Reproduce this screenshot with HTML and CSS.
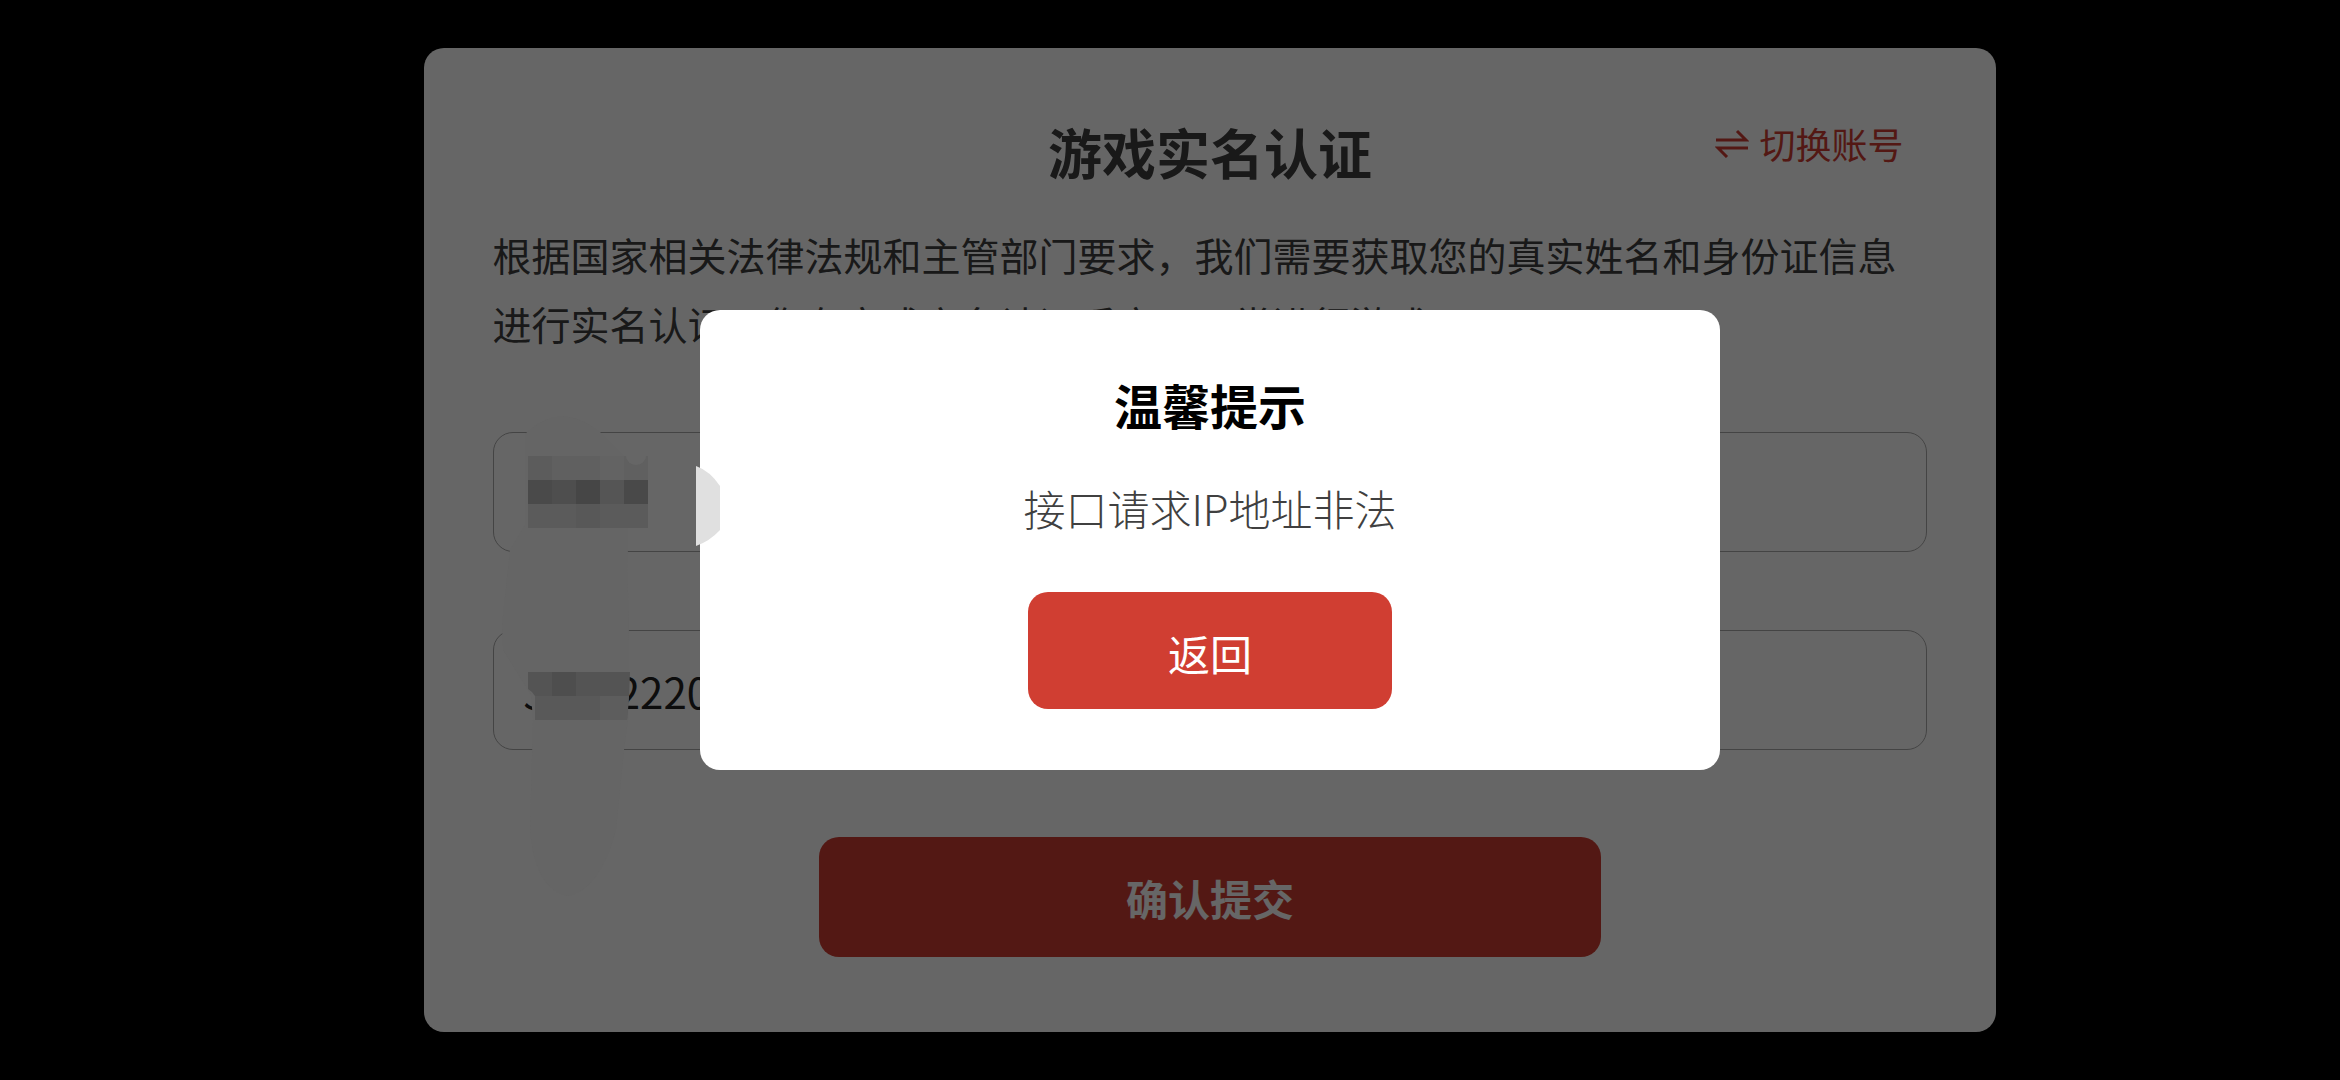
FILE: index.html
```
<!DOCTYPE html>
<html lang="zh">
<head>
    <meta charset="UTF-8">
    <meta name="viewport" content="width=device-width, initial-scale=1.0">
    <title>游戏实名认证</title>
    <link rel="stylesheet" href="styles.css">
</head>
<body>
<main class="page">
    <form class="auth-card">
        <div class="auth-header">
            <h1>游戏实名认证</h1>
            <button type="button" class="switch-btn">
                <svg class="switch-icon" viewBox="0 0 34 30" aria-hidden="true">
                    <path d="M1 12H31L22 3M33 20H3L12 29"/>
                </svg>
                切换账号
            </button>
        </div>

        <p class="auth-desc">根据国家相关法律法规和主管部门要求，我们需要获取您的真实姓名和身份证信息进行实名认证，您在完成实名认证后方可正常进行游戏。</p>

        <div class="form-group">
            <input type="text" class="realname" aria-label="真实姓名">
            <input type="text" class="idcard" aria-label="身份证号" value="3&#8199;&#8199;&#8199;2220">
        </div>

        <button type="submit" class="submit-btn">确认提交</button>
    </form>
</main>

<div class="overlay">
    <div class="modal" role="dialog" aria-labelledby="modalTitle">
        <h2 id="modalTitle">温馨提示</h2>
        <p class="modal-text">接口请求IP地址非法</p>
        <button type="button" class="back-btn">返回</button>
    </div>
</div>

<!-- 隐私遮挡 -->
<svg class="privacy-mask" viewBox="0 0 230 500" aria-hidden="true">
    <path fill="#656565" d="M25 34Q60 0 100 32L128 60V150L127 165L129 220L128 320L124 350L116 430Q100 490 68 496Q35 490 30 430L33 320L31 295L3 250L2 225L10 150L25 125Z"/>
    <g shape-rendering="crispEdges">
        <path fill="#5c5c5c" d="M28 56h24v24H28z"/>
        <path fill="#606060" d="M52 56h48v24H52z"/>
        <path fill="#636363" d="M100 56h24v24h-24z"/>
        <path fill="#606060" d="M124 56h24v24h-24z"/>
        <path fill="#4a4a4a" d="M28 80h24v24H28z"/>
        <path fill="#4e4e4e" d="M52 80h24v24H52z"/>
        <path fill="#464646" d="M76 80h24v24H76z"/>
        <path fill="#555" d="M100 80h24v24h-24z"/>
        <path fill="#494949" d="M124 80h24v24h-24z"/>
        <path fill="#5b5b5b" d="M28 104h120v24H28z"/>
        <path fill="#585858" d="M76 104h24v24H76z"/>
    </g>
    <path fill="#666" d="M126 56a10 9 0 0 0 20 0z"/>
    <path fill="#545454" d="M28 272H130L129 296H35Q33 292 28 289z"/>
    <path fill="#4e4e4e" d="M52 272h24v24H52z"/>
    <path fill="#595959" d="M35 296H129L127 320H35z"/>
    <path fill="#5d5d5d" d="M100 296h29l-2 24h-27z"/>
    <path fill="#e0e0e0" d="M196 66Q210 71 220 86V130Q210 141 196 146z"/>
</svg>
</body>
</html>
```
FILE: styles.css
```
* {
    box-sizing: border-box;
}

body {
    margin: 0;
    background-color: #000;
    font-family: "Noto Sans CJK SC", sans-serif;
    color: #404040;
}

h1, h2, p {
    margin: 0;
}

input, button {
    font-family: inherit;
}

button {
    border: none;
    cursor: pointer;
}

.page {
    min-height: 100vh;
    padding-left: 80px;
    display: flex;
    justify-content: center;
    align-items: center;
}

.auth-card {
    width: 69.6%;
    padding: 68px 69px 75px;
    border-radius: 20px;
    background-color: #fff;
    display: flex;
    flex-direction: column;
}

.auth-header {
    display: grid;
    grid-template-columns: 1fr auto 1fr;
    margin-bottom: 32px;
}

.auth-header h1 {
    grid-column: 2;
    font-size: 54px;
    line-height: 72px;
}

.switch-btn {
    justify-self: end;
    align-self: start;
    display: flex;
    align-items: center;
    gap: 10px;
    padding: 0 24px 0 0;
    background: none;
    color: #d03e32;
    font-size: 36px;
    line-height: 54px;
}

.switch-icon {
    width: 34px;
    height: 30px;
    fill: none;
    stroke: #d03e32;
    stroke-width: 3;
}

.auth-desc {
    margin-bottom: 74px;
    font-size: 39px;
    line-height: 69px;
}

.form-group {
    display: flex;
    flex-direction: column;
    gap: 78px;
    margin-bottom: 87px;
}

.form-group input {
    width: 100%;
    height: 120px;
    padding: 0 30px;
    border: 1px solid #aaa;
    border-radius: 20px;
    background-color: #fff;
    color: #222;
    font-size: 42px;
}

.submit-btn {
    align-self: center;
    width: 54.5%;
    height: 120px;
    border-radius: 20px;
    background-color: #d03e32;
    color: #fff;
    font-size: 42px;
    font-weight: bold;
}

.overlay {
    position: fixed;
    inset: 0;
    padding-left: 80px;
    display: flex;
    justify-content: center;
    align-items: center;
    background-color: rgba(0, 0, 0, 0.6);
}

.modal {
    width: 45.1%;
    padding: 58px 30px 61px;
    border-radius: 20px;
    background-color: #fff;
    text-align: center;
}

.modal h2 {
    margin-bottom: 38px;
    color: #000;
    font-size: 48px;
    line-height: 72px;
}

.modal-text {
    margin-bottom: 54px;
    font-size: 42px;
    font-weight: 300;
    line-height: 60px;
}

.back-btn {
    width: 38%;
    height: 117px;
    padding-top: 4px;
    border-radius: 20px;
    background-color: #d03e32;
    color: #fff;
    font-size: 42px;
}

.privacy-mask {
    position: absolute;
    left: 500px;
    top: 400px;
    width: 230px;
    height: 500px;
}
```
